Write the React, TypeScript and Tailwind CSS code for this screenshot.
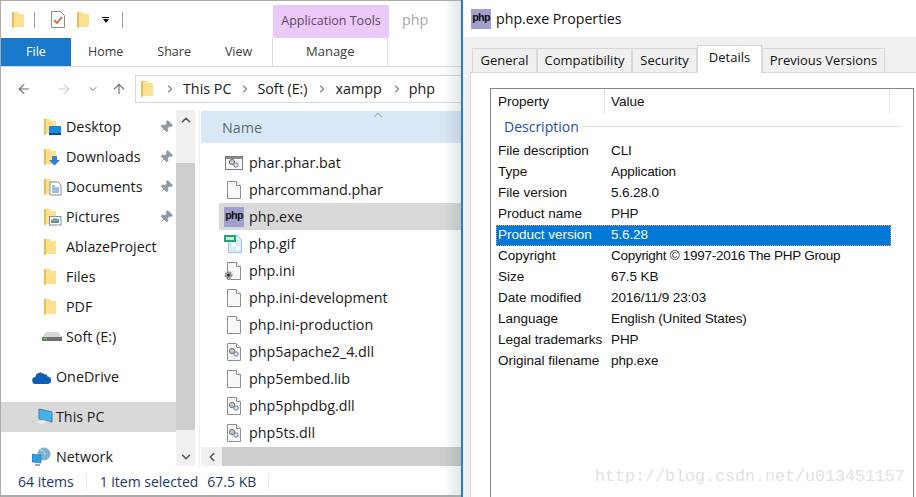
import { ChevronDown, ChevronLeft, ChevronRight, ChevronUp, ArrowLeft, ArrowRight, ArrowUp, Pin } from 'lucide-react';

const Folder = () => (
  <svg width="12" height="18" viewBox="0 0 12 18" className="shrink-0">
    <path d="M0 1h6l1 2h5v13H2l-2 1.5z" fill="#fbe08e" />
    <path d="M0 1h2v15l-2 1.5z" fill="#e9bd58" />
  </svg>
);

const SpecialFolder = ({ kind }: { kind: string }) => (
  <svg width="18" height="18" viewBox="0 0 18 18" className="shrink-0">
    <path d="M0 1h6l1 2h5v13H2l-2 1.5z" fill="#fbe08e" />
    <path d="M0 1h2v15l-2 1.5z" fill="#e9bd58" />
    {kind === 'desktop' && (
      <>
        <rect x="5" y="8" width="12" height="9" fill="#1a8ae0" />
        <rect x="5" y="15" width="12" height="2" fill="#0b4f8c" />
      </>
    )}
    {kind === 'downloads' && <path d="M8 8h5v4h3l-5.5 5.5L5 12h3z" fill="#2f7fd6" />}
    {kind === 'documents' && (
      <>
        <path d="M6 4h8l3 3v10H6z" fill="#fff" stroke="#8a8f94" />
        <path d="M8 8h3M8 10h7M8 12h7M8 14h7" stroke="#3a7fc4" />
      </>
    )}
    {kind === 'pictures' && (
      <>
        <rect x="5.5" y="8.5" width="11.5" height="8.5" fill="#fff" stroke="#8a8f94" />
        <path d="M7 12l3-2 5 1v2H7z" fill="#6fa4cc" />
        <path d="M7 13h8v2H7z" fill="#7d8f7a" />
      </>
    )}
  </svg>
);

const Drive = () => (
  <svg width="20" height="12" viewBox="0 0 20 12" className="shrink-0">
    <path d="M4 1h12l4 5v4H0V6z" fill="#d6d8d6" />
    <path d="M0 6h20v4H0z" fill="#6d706e" />
    <rect x="2" y="7" width="3" height="1.5" fill="#6fd04a" />
  </svg>
);

const Cloud = () => (
  <svg width="20" height="13" viewBox="0 0 20 13" className="shrink-0">
    <path d="M4 13a3.5 3.5 0 0 1-.6-7A5 5 0 0 1 12 3.200a3.500 3.500 0 0 1 3.800 2.300A3.800 3.800 0 0 1 16 13z" fill="#0f5fb8" />
  </svg>
);

const Computer = () => (
  <svg width="22" height="18" viewBox="0 0 22 18" className="shrink-0">
    <path d="M7 1l13 3v10L7 11z" fill="#45b4ee" stroke="#4a7c9a" />
    <path d="M0 14l10-2 8 2-8 3z" fill="#e6e8ea" stroke="#c4c8cc" strokeWidth="0.600" />
  </svg>
);

const NetworkIcon = () => (
  <svg width="20" height="20" viewBox="0 0 20 20" className="shrink-0">
    <circle cx="12" cy="7" r="6.500" fill="#7fb2cf" />
    <path d="M8 3c3 0 5 2 5 5" stroke="#c7e0ee" fill="none" />
    <path d="M0 7l9 1v8l-9-1z" fill="#2f9de0" stroke="#1d6ea6" strokeWidth="0.600" />
    <path d="M3 17h5v2H3z" fill="#9aa4aa" />
  </svg>
);

const GearDots = ({ x, y }: { x: number; y: number }) => (
  <g>
    <circle cx={x} cy={y} r="2.600" fill="#c8c8c8" stroke="#6f6f6f" />
    <circle cx={x + 4} cy={y + 3} r="2.200" fill="#dce6f0" stroke="#6f8296" />
  </g>
);

// blank sheet with folded corner, other file types draw on top of it
const Sheet = ({ kind }: { kind?: string }) => (
  <svg width="20" height="20" viewBox="0 0 20 20" className="shrink-0">
    <path d="M3.500 1.500h9l4 4v13h-13z" fill="#f8f8f8" stroke="#8f8f8f" />
    <path d="M12.500 1.500v4h4" fill="#fff" stroke="#8f8f8f" />
    {kind === 'dll' && <GearDots x={8} y={9} />}
    {kind === 'ini' && (
      <>
        <circle cx="4.500" cy="14" r="3" fill="#a8a8a8" stroke="#8d8d8d" strokeWidth="2" strokeDasharray="1.500 1" />
        <circle cx="4.500" cy="14" r="1.500" fill="#333" />
      </>
    )}
  </svg>
);

const BatIcon = () => (
  <svg width="20" height="20" viewBox="0 0 20 20" className="shrink-0">
    <rect x="1.500" y="3.500" width="17" height="13" fill="#f8f8f8" stroke="#7c7c7c" />
    <rect x="2" y="4" width="16" height="2" fill="#8a8a8a" />
    <GearDots x={8} y={9} />
  </svg>
);

const GifIcon = () => (
  <svg width="20" height="20" viewBox="0 0 20 20" className="shrink-0">
    <path d="M4.500 1.500h9l4 4v13h-13z" fill="#d8ecf9" stroke="#9cc4dc" />
    <circle cx="10" cy="11" r="2" fill="#fff" />
    <circle cx="14" cy="14" r="2" fill="#fff" />
    <rect x="0" y="1" width="12" height="7" fill="#22a56e" />
    <rect x="2" y="3" width="8" height="3" fill="#bff0d8" />
  </svg>
);

const PhpIcon = () => (
  <div className="flex h-5 w-5 shrink-0 items-center justify-center bg-[#a09fcd] font-['Liberation_Mono',monospace] text-[11px] font-bold tracking-[-0.8px] text-[#111]">
    php
  </div>
);

const navTop = [
  { name: 'Desktop', icon: <SpecialFolder kind="desktop" />, pin: true },
  { name: 'Downloads', icon: <SpecialFolder kind="downloads" />, pin: true },
  { name: 'Documents', icon: <SpecialFolder kind="documents" />, pin: true },
  { name: 'Pictures', icon: <SpecialFolder kind="pictures" />, pin: true },
  { name: 'AblazeProject', icon: <Folder /> },
  { name: 'Files', icon: <Folder /> },
  { name: 'PDF', icon: <Folder /> },
];

const files = [
  { name: 'phar.phar.bat', icon: <BatIcon /> },
  { name: 'pharcommand.phar', icon: <Sheet /> },
  { name: 'php.exe', icon: <PhpIcon />, selected: true },
  { name: 'php.gif', icon: <GifIcon /> },
  { name: 'php.ini', icon: <Sheet kind="ini" /> },
  { name: 'php.ini-development', icon: <Sheet /> },
  { name: 'php.ini-production', icon: <Sheet /> },
  { name: 'php5apache2_4.dll', icon: <Sheet kind="dll" /> },
  { name: 'php5embed.lib', icon: <Sheet /> },
  { name: 'php5phpdbg.dll', icon: <Sheet kind="dll" /> },
  { name: 'php5ts.dll', icon: <Sheet kind="dll" /> },
];

const details = [
  ['File description', 'CLI'],
  ['Type', 'Application'],
  ['File version', '5.6.28.0'],
  ['Product name', 'PHP'],
  ['Product version', '5.6.28'],
  ['Copyright', 'Copyright © 1997-2016 The PHP Group'],
  ['Size', '67.5 KB'],
  ['Date modified', '2016/11/9 23:03'],
  ['Language', 'English (United States)'],
  ['Legal trademarks', 'PHP'],
  ['Original filename', 'php.exe'],
];

const tabs = [
  { name: 'General', w: 'w-[65px]' },
  { name: 'Compatibility', w: 'w-[95px]' },
  { name: 'Security', w: 'w-[65px]' },
];

const Explorer = () => (
  <div className="relative flex h-full w-[461px] shrink-0 flex-col overflow-hidden border-t border-b-2 border-l border-t-[#ababab] border-b-[#ababab] border-l-[#ababab] font-['Open_Sans',sans-serif] text-[14.300px] text-[#1a1a1a]">
    <div className="flex h-[37px] shrink-0 items-center">
      <div className="ml-[11px] flex items-center">
        <Folder />
        <div className="ml-[10px] h-4 w-px bg-[#9a9a9a]" />
        <svg width="16" height="19" viewBox="0 0 16 19" className="ml-[15px]">
          <path d="M1.500 1.500h9l4 4v12h-13z" fill="#fff" stroke="#8a8a8a" />
          <path d="M4 10l3 3 5-6" stroke="#e2562a" strokeWidth="1.600" fill="none" />
        </svg>
        <div className="ml-[11px]">
          <Folder />
        </div>
        <div className="ml-[13px] flex flex-col items-center gap-[1px]">
          <div className="h-px w-[7px] bg-black" />
          <div className="h-0 w-0 border-x-[3.500px] border-t-[4px] border-x-transparent border-t-black" />
        </div>
        <div className="ml-[13px] h-4 w-px bg-[#9a9a9a]" />
      </div>
      <div className="ml-[150px] flex h-[33px] w-[116px] items-center justify-center self-end whitespace-nowrap bg-[#ebc9fa] text-[12.500px] text-[#5a4a64]">
        Application Tools
      </div>
      <div className="ml-[13px] text-[#a8a8a8]">php</div>
    </div>
    <div className="flex h-[29px] shrink-0 items-stretch border-b border-[#dadbdc] text-[12.500px] text-[#3b3b3b]">
      <div className="flex w-[70px] items-center justify-center bg-[#1979ca] text-white">File</div>
      <div className="ml-[17px] flex items-center">Home</div>
      <div className="ml-[34px] flex items-center">Share</div>
      <div className="ml-[34px] flex items-center">View</div>
      <div className="ml-[20px] flex w-[116px] items-center justify-center border-x border-[#dadbdc] text-[13px]">Manage</div>
    </div>
    <div className="flex h-[43px] shrink-0 items-center">
      <ArrowLeft size={16} strokeWidth={1.600} className="ml-[15px] text-[#6b6b6b]" />
      <ArrowRight size={16} strokeWidth={1.600} className="ml-[24px] text-[#d0d0d0]" />
      <ChevronDown size={12} strokeWidth={2} className="ml-[15px] text-[#777]" />
      <ArrowUp size={16} strokeWidth={1.600} className="ml-[12px] text-[#6b6b6b]" />
      <div className="ml-[8px] flex h-[28px] flex-1 items-center border border-r-0 border-[#d9d9d9] text-[#1a1a1a]">
        <div className="ml-[5px]">
          <Folder />
        </div>
        <ChevronRight size={12} strokeWidth={2.200} className="ml-[11px] text-[#808080]" />
        <span className="ml-[7px]">This PC</span>
        <ChevronRight size={12} strokeWidth={2.200} className="ml-[8px] text-[#808080]" />
        <span className="ml-[6px]">Soft (E:)</span>
        <ChevronRight size={12} strokeWidth={2.200} className="ml-[8px] text-[#808080]" />
        <span className="ml-[8px]">xampp</span>
        <ChevronRight size={12} strokeWidth={2.200} className="ml-[9px] text-[#808080]" />
        <span className="ml-[6px]">php</span>
      </div>
    </div>
    <div className="flex min-h-0 flex-1">
      <div className="flex w-[175px] shrink-0 flex-col pt-[2px]">
        {navTop.map((item) => (
          <div key={item.name} className="flex h-[30px] shrink-0 items-center pl-[43px]">
            <div className="w-[22px]">{item.icon}</div>
            <span>{item.name}</span>
            {item.pin && <Pin size={14} fill="#8f9aa3" strokeWidth={1.500} className="ml-auto mr-[3px] rotate-45 text-[#8f9aa3]" />}
          </div>
        ))}
        <div className="flex h-[30px] shrink-0 items-center pl-[41px]">
          <div className="w-[24px]">
            <Drive />
          </div>
          <span>Soft (E:)</span>
        </div>
        <div className="mt-[10px] flex h-[30px] shrink-0 items-center pl-[31px]">
          <div className="w-[24px]">
            <Cloud />
          </div>
          <span>OneDrive</span>
        </div>
        <div className="mt-[10px] flex h-[30px] shrink-0 items-center bg-[#d9d9d9] pl-[31px]">
          <div className="w-[24px]">
            <Computer />
          </div>
          <span>This PC</span>
        </div>
        <div className="mt-[10px] flex h-[30px] shrink-0 items-center pl-[31px]">
          <div className="w-[24px]">
            <NetworkIcon />
          </div>
          <span>Network</span>
        </div>
      </div>
      <div className="mb-[2px] flex w-[19px] shrink-0 flex-col bg-[#f0f0f0]">
        <div className="flex h-[53px] shrink-0 justify-center pt-[3px]">
          <ChevronUp size={14} strokeWidth={2.500} className="text-[#505050]" />
        </div>
        <div className="flex-1 bg-[#cdcdcd]" />
        <div className="flex h-[36px] shrink-0 items-end justify-center pb-[2px]">
          <ChevronDown size={14} strokeWidth={2.500} className="text-[#505050]" />
        </div>
      </div>
      <div className="relative ml-[4px] flex min-w-0 flex-1 flex-col border-l border-[#f0f0f0]">
        <div className="relative ml-px mt-px flex h-[32px] shrink-0 items-center bg-[#d9e8f6] pl-[21px] pt-[2px] text-[#5a6b80]">
          Name
          <ChevronUp size={14} strokeWidth={1.200} className="absolute left-[170px] top-[-3px] text-[#777]" />
        </div>
        <div className="flex min-h-0 flex-1 flex-col pt-[6px]">
          {files.map((file) => (
            <div key={file.name} className={`ml-[19px] flex h-[27px] shrink-0 items-center pl-[5px] ${file.selected ? 'bg-[#d9d9d9]' : ''}`}>
              <div className="w-[25px]">{file.icon}</div>
              <span>{file.name}</span>
            </div>
          ))}
        </div>
        <div className="ml-px flex h-[19px] shrink-0 bg-[#cdcdcd]">
          <div className="flex w-[21px] items-center justify-center bg-[#f0f0f0]">
            <ChevronLeft size={14} strokeWidth={2.500} className="text-[#505050]" />
          </div>
        </div>
        <div className="h-[2px] shrink-0" />
      </div>
    </div>
    <div className="flex h-[27px] shrink-0 items-center pl-[17px] text-[14px] text-[#1f3a5f]">
      <span>64 items</span>
      <div className="ml-[12px] h-4 w-px bg-[#e5e5e5]" />
      <span className="ml-[13px]">1 item selected</span>
      <span className="ml-[9px]">67.5 KB</span>
      <div className="ml-[12px] h-4 w-px bg-[#e5e5e5]" />
    </div>
    <div className="absolute bottom-0 right-0 top-0 w-[18px] bg-gradient-to-r from-transparent to-black/10" />
  </div>
);

const Properties = () => (
  <div className="flex h-full min-w-0 flex-1 flex-col border-l-2 border-[#1f7fd0] font-['Liberation_Sans',sans-serif] text-[13.500px] text-[#111]">
    <div className="flex h-[37px] shrink-0 items-center pl-[8px] pr-[2px]">
      <PhpIcon />
      <span className="ml-[5px] font-['Open_Sans',sans-serif] text-[14.200px]">php.exe Properties</span>
    </div>
    <div className="flex min-h-0 flex-1 flex-col bg-[#f0f0f0] pl-[7px]">
      <div className="flex h-[35px] shrink-0 items-end pl-[2px]">
        {tabs.map((tab) => (
          <div key={tab.name} className={`flex h-[24px] ${tab.w} items-center justify-center border border-b-0 border-[#d9d9d9] bg-[#f0f0f0] pt-px font-['Open_Sans',sans-serif] text-[13px]`}>
            {tab.name}
          </div>
        ))}
        <div className="z-10 mb-[-1px] flex h-[28px] w-[65px] items-center justify-center border border-b-0 border-[#d9d9d9] bg-white pb-[3px] font-['Open_Sans',sans-serif] text-[13px]">
          Details
        </div>
        <div className="flex h-[24px] w-[123px] items-center justify-center border border-b-0 border-[#d9d9d9] bg-[#f0f0f0] pt-px font-['Open_Sans',sans-serif] text-[13px]">
          Previous Versions
        </div>
      </div>
      <div className="flex min-h-0 flex-1 border-l border-t border-[#d9d9d9] bg-white pl-[19px] pr-[2px] pt-[15px]">
        <div className="flex min-w-0 flex-1 flex-col border-x border-t border-[#828790] pl-[7px]">
          <div className="flex h-[25px] shrink-0 items-center">
            <span className="w-[106px] shrink-0 pt-[2px]">Property</span>
            <div className="h-full w-px bg-[#e5e5e5]" />
            <span className="ml-[6px] w-[278px] pt-[2px]">Value</span>
            <div className="h-full w-px bg-[#e5e5e5]" />
          </div>
          <div className="flex h-[25px] shrink-0 items-center pl-[6px] text-[#1a4fb5]">
            <span className="font-['Open_Sans',sans-serif] text-[14px]">Description</span>
            <div className="ml-[4px] mr-[11px] h-px flex-1 bg-[#d5dff0]" />
          </div>
          <div className="mt-[2px] flex flex-col">
            {details.map(([label, value]) => {
              const isSelected = label === 'Product version';
              return (
                <div key={label} className={`flex h-[21px] w-[395px] shrink-0 items-center ${isSelected ? 'ml-[-2px] border border-dotted border-[#e0a050] bg-[#0078d7] pl-px text-white' : ''}`}>
                  <span className="w-[113px] shrink-0 whitespace-nowrap">{label}</span>
                  <span className={`whitespace-nowrap ${label === 'Copyright' ? 'tracking-[-0.28px]' : 'tracking-[-0.1px]'}`}>{value}</span>
                </div>
              );
            })}
          </div>
        </div>
      </div>
    </div>
  </div>
);

export default function App() {
  return (
    <div className="relative flex h-[497px] w-[916px] overflow-hidden bg-white">
      <Explorer />
      <Properties />
      <div className="absolute left-[595px] top-[467px] whitespace-nowrap font-['Liberation_Mono',monospace] text-[16.670px] leading-[20px] text-[#e2e2de]">
        http://blog.csdn.net/u013451157
      </div>
    </div>
  );
}
